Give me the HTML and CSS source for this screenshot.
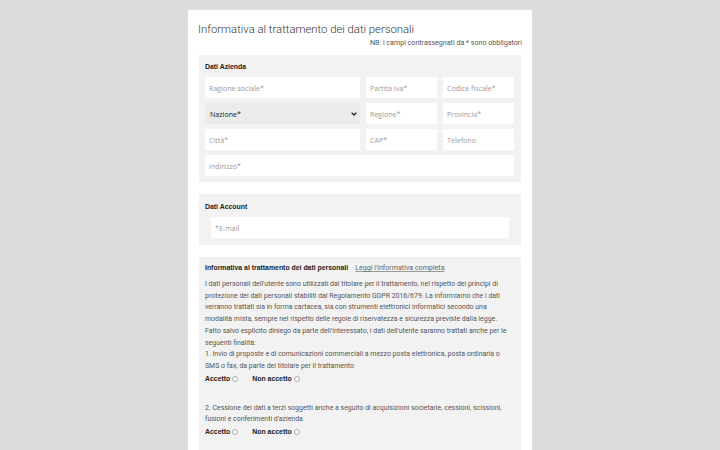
FILE: index.html
```html
<!DOCTYPE html>
<html lang="it">
<head>
<meta charset="UTF-8">
<title>Registrazione</title>
<link rel="stylesheet" href="styles.css">
</head>
<body>
<div class="page">
  <form class="card">
    <h1 class="heading">Informativa al trattamento dei dati personali</h1>
    <div class="note">NB: i campi contrassegnati da * sono obbligatori</div>

    <div class="box">
      <div class="box-title">Dati Azienda</div>
      <div class="fields">
        <input class="field" type="text" placeholder="Ragione sociale*">
        <input class="field" type="text" placeholder="Partita Iva*">
        <input class="field" type="text" placeholder="Codice fiscale*">
        <div class="select">
          <span>Nazione*</span>
          <svg width="6" height="4" viewBox="0 0 6 4"><path d="M0.6 0.6 L3 3 L5.4 0.6" fill="none" stroke="#222" stroke-width="1.3"/></svg>
        </div>
        <input class="field" type="text" placeholder="Regione*">
        <input class="field" type="text" placeholder="Provincia*">
        <input class="field" type="text" placeholder="Città*">
        <input class="field" type="text" placeholder="CAP*">
        <input class="field" type="text" placeholder="Telefono">
        <input class="field wide" type="text" placeholder="Indirizzo*">
      </div>
    </div>

    <div class="box account">
      <div class="box-title">Dati Account</div>
      <input class="field" type="email" placeholder="*E-mail">
    </div>

    <div class="box privacy">
      <div class="privacy-head">
        <span class="box-title">Informativa al trattamento dei dati personali</span>
        <a class="link" href="#">Leggi l'informativa completa</a>
      </div>
      <p class="text intro">I dati personali dell'utente sono utilizzati dal titolare per il trattamento, nel rispetto dei principi di protezione dei dati personali stabiliti dal Regolamento GDPR 2016/679. La informiamo che i dati verranno trattati sia in forma cartacea, sia con strumenti elettronici informatici secondo una modalità mista, sempre nel rispetto delle regole di riservatezza e sicurezza previste dalla legge. Fatto salvo esplicito diniego da parte dell'interessato, i dati dell'utente saranno trattati anche per le seguenti finalità:</p>

      <div class="consent">
        <p class="text">1. Invio di proposte e di comunicazioni commerciali a mezzo posta elettronica, posta ordinaria o SMS o fax, da parte del titolare per il trattamento</p>
        <div class="choices">
          <label class="choice">Accetto <span class="radio"></span></label>
          <label class="choice">Non accetto <span class="radio"></span></label>
        </div>
      </div>

      <div class="consent">
        <p class="text">2. Cessione dei dati a terzi soggetti anche a seguito di acquisizioni societarie, cessioni, scissioni, fusioni e conferimenti d'azienda</p>
        <div class="choices">
          <label class="choice">Accetto <span class="radio"></span></label>
          <label class="choice">Non accetto <span class="radio"></span></label>
        </div>
      </div>
    </div>
  </form>
</div>
</body>
</html>
```

FILE: styles.css
```css
html, body { margin: 0; padding: 0; }
body { background: #dcdcdc; font-family: Roboto, "Liberation Sans", sans-serif; color: #333; height: 450px; overflow: hidden; }
.page { display: flex; justify-content: center; padding-top: 10px; }
.card { width: 322px; background: #fff; padding: 10px 11px 40px 11px; }

.heading { font-size: 11.3px; font-weight: 300; margin: 3px 0 0 -1px; line-height: 14px; color: #333; }
.note { text-align: right; font-size: 7.1px; line-height: 10px; color: #555; margin: 1px -1px 0 0; }

.box { background: #f2f2f2; margin-top: 7px; padding: 7px 7px 6px 6px; }
.box + .box { margin-top: 12px; }
.box-title { font-family: "Liberation Sans", Arial, sans-serif; font-weight: bold; font-size: 6.9px; line-height: 10px; color: #222; }

.fields { display: grid; grid-template-columns: 1fr 71px 71px; gap: 5px 6px; margin-top: 5px; }
.field { box-sizing: border-box; height: 21px; border: none; background: #fff; padding: 0 4px; font-family: "Open Sans", sans-serif; font-size: 7.1px; color: #333; outline: none; width: 100%; }
.field::placeholder { color: #9a9a9a; }
.wide { grid-column: 1 / -1; }
.select { display: flex; align-items: center; justify-content: space-between; height: 21px; background: #ebebeb; padding: 0 3px 0 5px; font-family: "Open Sans", sans-serif; font-size: 7.1px; color: #222; }

.account { padding: 8px 12px 7px 12px; }
.account .box-title { margin-left: -6px; }
.account .field { margin-top: 5px; display: block; padding-left: 4px; }

.privacy { padding: 6px 10px 20px 6px; }
.privacy-head { display: flex; align-items: baseline; gap: 7px; }
.link { font-size: 7.1px; color: #666; text-decoration: underline; text-decoration-color: #999; }
.text { margin: 0; font-size: 6.95px; line-height: 11.7px; color: #555; }
.intro { margin-top: 6px; }
.consent + .consent { margin-top: 18px; }
.choices { display: flex; gap: 14px; }
.choice { font-family: "Liberation Sans", Arial, sans-serif; font-weight: bold; font-size: 6.9px; line-height: 12px; color: #222; display: flex; align-items: center; gap: 2px; }
.radio { width: 4px; height: 4px; border: 0.8px solid #aaa; border-radius: 50%; background: #fff; }
```
